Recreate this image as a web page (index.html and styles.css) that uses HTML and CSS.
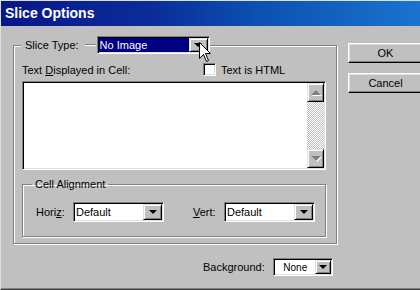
FILE: index.html
```html
<!DOCTYPE html>
<html lang="en">
<head>
  <meta charset="UTF-8">
  <title>Slice Options</title>
  <link rel="stylesheet" href="styles.css">
</head>
<body>

  <div class="window">
    <div class="titlebar">Slice Options</div>

    <div class="main">
      <fieldset class="group group-slice">
        <legend class="legend-slice">
          <span>Slice Type:</span>
          <span class="rule"></span>
          <span class="combo combo-selected combo-slice">
            <span class="combo-value">No Image</span>
            <span class="combo-btn"><i class="arrow"></i></span>
          </span>
        </legend>

        <div class="cell-row">
          <span class="label-cell">Text <u>D</u>isplayed in Cell:</span>
          <span class="check"><span class="checkbox"></span>Text is HTML</span>
        </div>

        <div class="textarea">
          <div class="text-field"></div>
          <div class="scrollbar">
            <span class="scroll-btn"><i class="arrow-up"></i></span>
            <span class="scroll-track"></span>
            <span class="scroll-btn"><i class="arrow-down"></i></span>
          </div>
        </div>

        <fieldset class="group group-align">
          <legend class="legend-align">Cell Alignment</legend>
          <div class="align-row">
            <span class="align-label">Hori<u>z</u>:</span>
            <span class="combo combo-align">
              <span class="combo-value">Default</span>
              <span class="combo-btn"><i class="arrow"></i></span>
            </span>
            <span class="align-label align-label-vert"><u>V</u>ert:</span>
            <span class="combo combo-align">
              <span class="combo-value">Default</span>
              <span class="combo-btn"><i class="arrow"></i></span>
            </span>
          </div>
        </fieldset>
      </fieldset>

      <div class="buttons">
        <button class="btn">OK</button>
        <button class="btn">Cancel</button>
      </div>
    </div>

    <div class="bg-row">
      <span class="bg-label">Background:</span>
      <span class="combo combo-bg">
        <span class="combo-value">None</span>
        <span class="combo-btn"><i class="arrow"></i></span>
      </span>
    </div>

    <!-- mouse pointer over the slice type drop-down -->
    <svg class="cursor" width="13" height="21" viewBox="0 0 13 21">
      <path d="M0.5 0.5 L0.5 16.5 L4.5 12.5 L7.5 19.5 L9.5 18.5 L6.5 11.5 L11.5 11.5 Z" fill="#fff" stroke="#000" stroke-width="1"/>
    </svg>
  </div>

</body>
</html>
```

FILE: styles.css
```css
/* Reset */
* {
  margin: 0;
  padding: 0;
  box-sizing: border-box;
}

body {
  background: #c0c0c0;
  font-family: 'Liberation Sans', Arial, sans-serif;
  font-size: 11px;
  color: #000;
}

u {
  text-decoration: underline;
  text-underline-offset: 1px;
}

/* Dialog window */
.window {
  position: relative;
  width: 420px;
  height: 290px;
  overflow: hidden;
  background: #c0c0c0;
  border-top: 1px solid #dfdfdf;
  border-left: 1px solid #dfdfdf;
  border-bottom: 1px solid #404040;
  box-shadow: inset 0 -1px 0 #808080;
}

.titlebar {
  height: 25px;
  padding-left: 4px;
  line-height: 25px;
  font-size: 14px;
  font-weight: bold;
  color: #fff;
  background: linear-gradient(to right, #08168a 0%, #0a2c98 35%, #0c4fb0 60%, #1a74cf 100%);
}

.main {
  display: flex;
  align-items: flex-start;
}

/* Etched group boxes */
.group {
  border: 1px solid #808080;
  box-shadow: inset 1px 1px 0 #fff, 1px 1px 0 #fff;
}

.group-slice {
  width: 323px;
  margin: 10px 0 0 12px;
  padding: 9px 10px 6px 8px;
}

.legend-slice {
  display: flex;
  align-items: center;
  height: 18px;
  margin-left: -1px;
  padding-left: 4px;
  background: #c0c0c0;
}

.rule {
  width: 11px;
  margin-left: 6px;
  border-top: 1px solid #808080;
  border-bottom: 1px solid #fff;
}

.cell-row {
  display: flex;
  align-items: center;
  height: 13px;
}

.label-cell {
  width: 181px;
}

.check {
  display: flex;
  align-items: center;
  gap: 5px;
}

.checkbox {
  width: 13px;
  height: 13px;
  background: #fff;
  border: 1px solid;
  border-color: #808080 #fff #fff #808080;
  box-shadow: inset 1px 1px 0 #000, inset -1px -1px 0 #dfdfdf;
}

/* Multi-line text field */
.textarea {
  display: flex;
  height: 89px;
  margin-top: 5px;
  background: #fff;
  border: 1px solid;
  border-color: #808080 #fff #fff #808080;
  box-shadow: inset 1px 1px 0 #000, inset -1px -1px 0 #dfdfdf;
  padding: 1px;
}

.text-field {
  flex: 1;
}

.scrollbar {
  display: flex;
  flex-direction: column;
  width: 17px;
}

.scroll-btn {
  display: flex;
  align-items: center;
  justify-content: center;
  height: 19px;
  background: #c0c0c0;
  border: 1px solid;
  border-color: #dfdfdf #000 #000 #dfdfdf;
  box-shadow: inset 1px 1px 0 #fff, inset -1px -1px 0 #808080;
}

.scroll-track {
  flex: 1;
  background: repeating-conic-gradient(#fff 0 25%, #c0c0c0 0 50%) 0 0 / 2px 2px;
}

.arrow-up,
.arrow-down {
  width: 0;
  height: 0;
  border-left: 5px solid transparent;
  border-right: 5px solid transparent;
  filter: drop-shadow(1px 1px 0 #fff);
}

.arrow-up {
  border-bottom: 5px solid #808080;
}

.arrow-down {
  border-top: 5px solid #808080;
}

/* Cell alignment group */
.group-align {
  margin-top: 7px;
  padding: 11px 10px 14px 12px;
}

.legend-align {
  margin-left: -3px;
  padding: 0 3px;
  line-height: 14px;
}

.align-row {
  display: flex;
  align-items: center;
  margin-left: 1px;
}

.align-label {
  width: 37px;
}

.align-label-vert {
  width: 31px;
  margin-left: 29px;
}

/* Drop-down lists */
.combo {
  display: flex;
  align-items: stretch;
  background: #fff;
  border: 1px solid;
  border-color: #808080 #fff #fff #808080;
  box-shadow: inset 1px 1px 0 #000, inset -1px -1px 0 #dfdfdf;
  padding: 1px;
}

.combo-value {
  flex: 1;
  display: flex;
  align-items: center;
  padding-left: 1px;
}

.combo-btn {
  display: flex;
  align-items: center;
  justify-content: center;
  width: 19px;
  background: #c0c0c0;
  border: 1px solid;
  border-color: #dfdfdf #000 #000 #dfdfdf;
  box-shadow: inset 1px 1px 0 #fff, inset -1px -1px 0 #808080;
}

.arrow {
  width: 0;
  height: 0;
  border-left: 4px solid transparent;
  border-right: 4px solid transparent;
  border-top: 4px solid #000;
}

.combo-slice {
  width: 113px;
  height: 18px;
  margin-left: 1px;
}

.combo-selected .combo-value {
  background: #000080;
  color: #fff;
}

.combo-align {
  width: 91px;
  height: 20px;
}

.combo-bg {
  width: 60px;
  height: 18px;
  margin-left: 8px;
}

.combo-bg .combo-value {
  justify-content: center;
  font-size: 10px;
}

.combo-bg .combo-btn {
  width: 16px;
}

/* Push buttons */
.buttons {
  display: flex;
  flex-direction: column;
  gap: 10px;
  margin: 17px 0 0 11px;
}

.btn {
  width: 75px;
  height: 20px;
  font-family: inherit;
  font-size: 11px;
  background: #c0c0c0;
  border: 1px solid;
  border-color: #fff #000 #000 #fff;
  box-shadow: inset -1px -1px 0 #808080, inset 1px 1px 0 #dfdfdf;
}

/* Background row */
.bg-row {
  display: flex;
  align-items: center;
  margin: 14px 0 0 202px;
}

/* Mouse pointer overlay */
.cursor {
  position: absolute;
  left: 198px;
  top: 41px;
}
```
